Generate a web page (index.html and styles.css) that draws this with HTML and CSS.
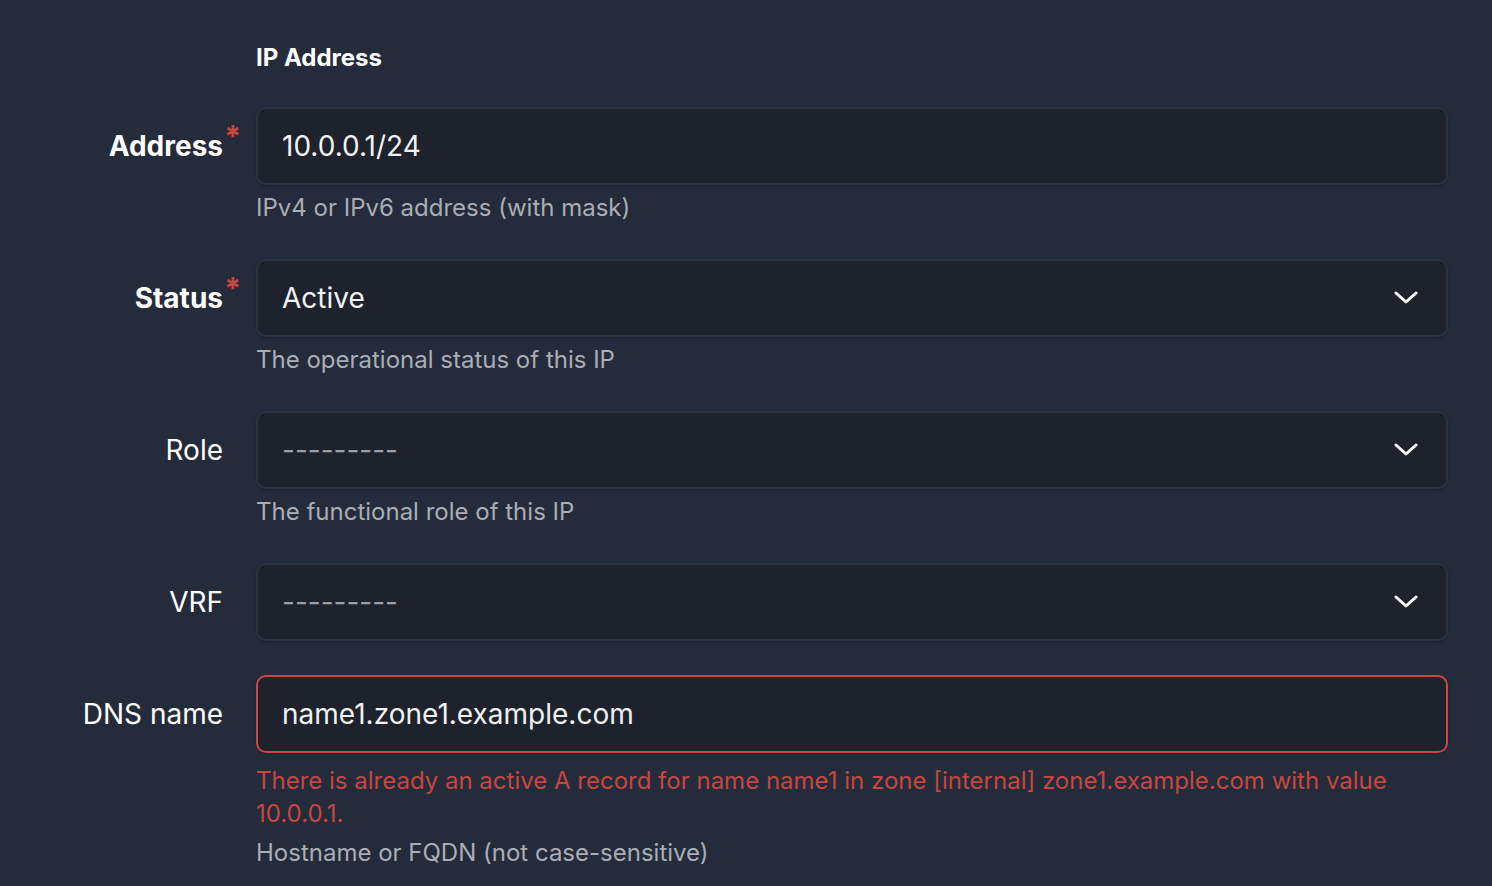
FILE: index.html
```html
<!DOCTYPE html>
<html>
<head>
<meta charset="utf-8">
<link rel="stylesheet" href="styles.css">
</head>
<body>
<div class="form">
  <div class="heading-row">
    <div></div>
    <h2 class="heading">IP Address</h2>
  </div>

  <div class="row">
    <label class="label required">Address</label>
    <div class="field">
      <div class="control">10.0.0.1/24</div>
      <div class="help">IPv4 or IPv6 address (with mask)</div>
    </div>
  </div>

  <div class="row">
    <label class="label required">Status</label>
    <div class="field">
      <div class="control select"><span>Active</span>
        <svg class="chev" viewBox="0 0 24 14" width="24" height="14"><path d="M2 2 L12 11 L22 2" fill="none" stroke="#ffffff" stroke-width="3" stroke-linecap="round" stroke-linejoin="round"/></svg>
      </div>
      <div class="help">The operational status of this IP</div>
    </div>
  </div>

  <div class="row">
    <label class="label">Role</label>
    <div class="field">
      <div class="control select"><span class="placeholder">---------</span>
        <svg class="chev" viewBox="0 0 24 14" width="24" height="14"><path d="M2 2 L12 11 L22 2" fill="none" stroke="#ffffff" stroke-width="3" stroke-linecap="round" stroke-linejoin="round"/></svg>
      </div>
      <div class="help">The functional role of this IP</div>
    </div>
  </div>

  <div class="row">
    <label class="label">VRF</label>
    <div class="field">
      <div class="control select"><span class="placeholder">---------</span>
        <svg class="chev" viewBox="0 0 24 14" width="24" height="14"><path d="M2 2 L12 11 L22 2" fill="none" stroke="#ffffff" stroke-width="3" stroke-linecap="round" stroke-linejoin="round"/></svg>
      </div>
    </div>
  </div>

  <div class="row">
    <label class="label">DNS name</label>
    <div class="field">
      <div class="control invalid">name1.zone1.example.com</div>
      <div class="error">There is already an active A record for name name1 in zone [internal] zone1.example.com with value 10.0.0.1.</div>
      <div class="help help-after">Hostname or FQDN (not case-sensitive)</div>
    </div>
  </div>
</div>
</body>
</html>
```

FILE: styles.css
```css
html, body {
  margin: 0;
  padding: 0;
  background: #242b3a;
}
body {
  font-family: Inter, "Noto Sans", sans-serif;
  color: #ffffff;
  -webkit-font-smoothing: antialiased;
}
.form {
  padding: 42px 44px 0 0;
}
.heading-row,
.row {
  display: grid;
  grid-template-columns: 223px 1fr;
  column-gap: 33px;
}
.heading {
  margin: 0 0 33px 0;
  font-size: 24px;
  line-height: 32px;
  font-weight: 700;
}
.row {
  align-items: start;
  margin-bottom: 34px;
}
.label {
  text-align: right;
  font-size: 28px;
  line-height: 78px;
  font-weight: 400;
  position: relative;
}
.label.required {
  font-weight: 700;
}
.label.required::after {
  content: "*";
  position: absolute;
  right: -18px;
  top: -10px;
  color: #c9473f;
  font-size: 30px;
  font-weight: 700;
}
.control {
  box-sizing: border-box;
  height: 78px;
  display: flex;
  align-items: center;
  padding: 0 24px;
  background: #1e222d;
  border: 2px solid #2a3242;
  border-radius: 10px;
  font-size: 28px;
  color: #f1f2f4;
  box-shadow: 0 1px 2px rgba(0, 0, 0, 0.25);
}
.control.select {
  justify-content: space-between;
  padding-right: 28px;
}
.placeholder {
  color: #9aa0aa;
}
.chev {
  display: block;
}
.control.invalid {
  border-color: #c9473f;
}
.help {
  margin-top: 6px;
  font-size: 24px;
  line-height: 34px;
  color: #a9aeb6;
}
.error {
  margin-top: 11px;
  font-size: 24px;
  line-height: 33px;
  color: #c5473f;
}
.help-after {
  margin-top: 6px;
}
```
